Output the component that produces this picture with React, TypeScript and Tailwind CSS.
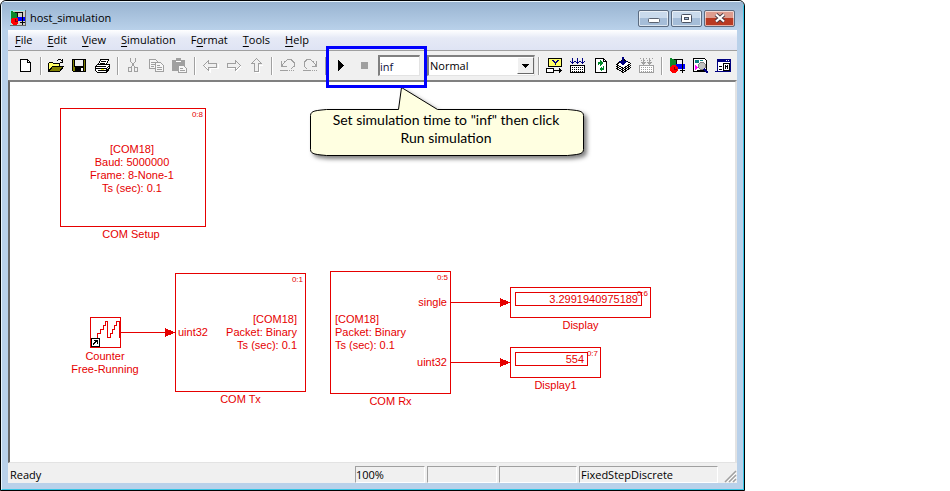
import type { ReactNode } from "react";

const menus: [string, string, string][] = [
  ["", "F", "ile"],
  ["", "E", "dit"],
  ["", "V", "iew"],
  ["", "S", "imulation"],
  ["F", "o", "rmat"],
  ["", "T", "ools"],
  ["", "H", "elp"],
];

function Icon({ children }: { children: ReactNode }) {
  return (
    <svg width="17" height="17" viewBox="0 0 17 17" fill="none" shapeRendering="crispEdges" aria-hidden="true">
      {children}
    </svg>
  );
}

function Tool({ label, children }: { label: string; children: ReactNode }) {
  return (
    <button type="button" aria-label={label} className="flex h-6 w-[23px] shrink-0 items-center justify-center">
      {children}
    </button>
  );
}

function Divider() {
  return (
    <div className="flex h-[18px] w-2 shrink-0 justify-center">
      <div className="w-px bg-[#a0a0a0]" />
      <div className="w-px bg-white" />
    </div>
  );
}

const GREY = "#a0a0a0";

function ModelIcon() {
  return (
    <>
      <path d="M1 1h2v1h2v1h2v7H1z" fill="#0a8a2a" />
      <path d="M7 7h9v5H7z" fill="#0000ff" />
      <path d="M5 2.500h8.500v12M7.500 3v4M11 13.500h5M13.500 11v5" stroke="#000" />
      <circle cx="5" cy="12" r="4" fill="#ff0000" />
      <path d="M5.500 10v2.500H8" stroke="#800000" />
    </>
  );
}

function DownArrows({ color }: { color: string }) {
  return (
    <path
      d="M3.500 1v6M8.500 1v6M13.500 1v6M2 5.500h3M7 5.500h3M12 5.500h3M1 4.500h1M5 4.500h2M10 4.500h2M15 4.500h1"
      stroke={color}
    />
  );
}

function Keypad({ color }: { color: string }) {
  return (
    <>
      <rect x="1.500" y="8.500" width="14" height="7" stroke={color} fill="#fff" />
      <path d="M3 10.500h12M3 12.500h12M3 14.500h12" stroke={color} strokeDasharray="1 1" />
    </>
  );
}

function Toolbar() {
  return (
    <div className="flex h-[29px] items-center bg-[#f0f0f0] pl-[6px]">
      <Tool label="New">
        <Icon>
          <path d="M3.500 2.500h7l3 3v9h-10z" fill="#fff" stroke="#000" />
          <path d="M10.500 2.500v3h3" stroke="#000" />
        </Icon>
      </Tool>
      <Divider />
      <Tool label="Open">
        <Icon>
          <path d="M.5 14.500v-8l1-1h3l1 1h6v3" fill="#ffff66" stroke="#000" />
          <path d="M.5 14.500l4-5h11l-4 5z" fill="#808000" stroke="#000" />
          <path d="M9 3.500h1M10 2.500h3M13 3.500h1M14.500 2v4M12 5.500h3" stroke="#000" />
        </Icon>
      </Tool>
      <Tool label="Save">
        <Icon>
          <path d="M1.500 2.500h13v12h-12l-1-1z" fill="#808000" stroke="#000" />
          <rect x="4" y="3" width="8" height="6" fill="#f0f0f0" />
          <rect x="4" y="10" width="9" height="5" fill="#000" />
          <rect x="10" y="11" width="2" height="3" fill="#fff" />
          <path d="M3.500 3v6h9V3" stroke="#000" />
        </Icon>
      </Tool>
      <Tool label="Print">
        <Icon>
          <path d="M4.500 7.500l2-5h8l-2 5" fill="#fff" stroke="#000" />
          <path d="M7 4.500h5M6 6.500h5" stroke="#000" />
          <path d="M1.500 9.500l2-2h12v4l-3 4h-9l-2-2z" fill="#fff" stroke="#000" />
          <path d="M2 9.500h10M2 11.500h10.500v4M13 10.500h1M14 9.500h1M13 12.500h1M14 11.500h1M4 13.500h8" stroke="#000" />
          <path d="M7 12h3v1H7z" fill="#ff0" />
        </Icon>
      </Tool>
      <Divider />
      <Tool label="Cut">
        <Icon>
          <path d="M5.500 1v3l4 6M10.500 1v3l-4 6" stroke={GREY} />
          <rect x="3.500" y="10.500" width="3" height="4" stroke={GREY} />
          <rect x="9.500" y="10.500" width="3" height="4" stroke={GREY} />
        </Icon>
      </Tool>
      <Tool label="Copy">
        <Icon>
          <path d="M1.500 2.500h6l2 2v7h-8z" fill="#f7f7f7" stroke={GREY} />
          <path d="M3 5.500h4M3 7.500h4M3 9.500h3" stroke={GREY} />
          <path d="M7.500 5.500h5l3 3v6h-8z" fill="#f7f7f7" stroke={GREY} />
          <path d="M9 8.500h3M9 10.500h5M9 12.500h5" stroke={GREY} />
        </Icon>
      </Tool>
      <Tool label="Paste">
        <Icon>
          <path d="M1 3h4V1h5v2h4v11H1z" fill={GREY} />
          <path d="M5 4.500h5" stroke="#fff" />
          <path d="M7.500 8.500h5l3 3v4h-8z" fill="#f7f7f7" stroke={GREY} />
          <path d="M9 11.500h3M9 13.500h5" stroke={GREY} />
        </Icon>
      </Tool>
      <Divider />
      <Tool label="Back">
        <Icon>
          <path d="M2 9.500h1l5 5v-3h8v-5" stroke="#fff" />
          <path d="M1.500 8.500l5-5v3h8v4h-8v3z" stroke={GREY} />
        </Icon>
      </Tool>
      <Tool label="Forward">
        <Icon>
          <path d="M3 11.500h8v3l5-5" stroke="#fff" />
          <path d="M15.500 8.500l-5-5v3h-8v4h8v3z" stroke={GREY} />
        </Icon>
      </Tool>
      <Tool label="Go up">
        <Icon>
          <path d="M7 15.500h4.500v-7h3" stroke="#fff" />
          <path d="M8.500 1.500l-5 5h3v8h4v-8h3z" stroke={GREY} />
        </Icon>
      </Tool>
      <Divider />
      <Tool label="Undo">
        <Icon>
          <path d="M2.500 4v5h5M3 8.500l3-4 3-2h3l3 3v4l-3 2" stroke={GREY} />
          <path d="M1 13.500h8" stroke={GREY} />
          <path d="M10 13.500h6" stroke={GREY} strokeDasharray="1 1" />
        </Icon>
      </Tool>
      <Tool label="Redo">
        <Icon>
          <path d="M14.500 4v5h-5M14 8.500l-3-4-3-2H5l-3 3v4l3 2" stroke={GREY} />
          <path d="M1 13.500h8" stroke={GREY} />
          <path d="M10 13.500h6" stroke={GREY} strokeDasharray="1 1" />
        </Icon>
      </Tool>
      <Divider />
      <div className="relative flex items-center">
        <Tool label="Run simulation">
          <Icon>
            <path d="M5 3h1v1h1v1h1v1h1v1h1v1h1v1h-1v1H9v1H8v1H7v1H6v1H5z" fill="#000" />
          </Icon>
        </Tool>
        <Tool label="Stop simulation">
          <Icon>
            <rect x="5" y="5" width="7" height="7" fill={GREY} />
          </Icon>
        </Tool>
        <input
          aria-label="Simulation stop time"
          defaultValue="inf"
          className="ml-0.5 h-[21px] w-[42px] border-t-2 border-r border-b border-l-2 border-t-[#808080] border-r-[#e3e3e3] border-b-[#e3e3e3] border-l-[#808080] bg-white text-[11px] leading-4 text-[#101040] outline-none"
        />
        <div className="pointer-events-none absolute -top-2 -left-1 z-10 h-[42px] w-[101px] border-[3px] border-[#0000fe]" />
      </div>
      <div className="relative ml-[7px] h-[21px] w-[108px] shrink-0">
        <select
          aria-label="Simulation mode"
          className="block size-full appearance-none border-t-2 border-r border-b border-l-2 border-t-[#808080] border-r-[#e3e3e3] border-b-[#e3e3e3] border-l-[#808080] bg-white pl-px text-[11px] leading-4 text-black outline-none"
        >
          <option>Normal</option>
        </select>
        <div className="pointer-events-none absolute top-0.5 right-px flex h-[17px] w-[17px] items-center justify-center border border-t-white border-r-[#696969] border-b-[#696969] border-l-white bg-[#f0f0f0]">
          <svg width="7" height="4" viewBox="0 0 7 4" shapeRendering="crispEdges" aria-hidden="true">
            <path d="M0 0h7v1H6v1H5v1H4v1H3V3H2V2H1V1H0z" fill="#000" />
          </svg>
        </div>
      </div>
      <Divider />
      <Tool label="Signal display">
        <Icon>
          <rect x="2.500" y="1.500" width="13" height="8" fill="#ffff66" stroke="#000" />
          <path d="M6 3h2v1h1v1h1V4h1V3h2v1h-1v1h-1v1h-1v2H9V6H8V5H7V4H6z" fill="#000080" />
          <rect x=".5" y="11.500" width="7" height="4" fill="#fff" stroke="#000" />
          <path d="M8 13.500h8M13.500 11v5M14.500 12v3" stroke="#000" />
        </Icon>
      </Tool>
      <Tool label="Incremental build">
        <Icon>
          <DownArrows color="#000080" />
          <Keypad color="#000" />
        </Icon>
      </Tool>
      <Tool label="Refresh model blocks">
        <Icon>
          <path d="M3.500 1.500h8l3 3v11h-11z" fill="#fff" stroke="#000" />
          <path d="M11.500 1.500v3h3" stroke="#000" />
          <path d="M6 8V5h2V3l3 3-3 3V7H7v1zM12 9v4h-2v2l-3-3 3-3v2h1V9z" fill="#008a2a" />
        </Icon>
      </Tool>
      <Tool label="Update diagram">
        <Icon>
          <path d="M1.500 11.500l7 4 7-5-7-4z" fill="#fff" stroke="#000" />
          <path d="M1.500 9.500l7 4 7-5-7-4z" fill="#fff" stroke="#000" />
          <path d="M1.500 7.500l7 4 7-5-7-4z" fill="#fff" stroke="#000" />
          <path d="M7 0h2v4h3v1h-1v1h-1v1H9v1H7V7H6V6H5V5H4V4h3z" fill="#000080" />
        </Icon>
      </Tool>
      <Tool label="Build subsystem">
        <Icon>
          <path d="M2 1.500h13M3 3.500h12" stroke={GREY} strokeDasharray="1 2" />
          <path d="M5.500 2v6M11.500 2v6M3 5.500h5M4 6.500h3M9 5.500h5M10 6.500h3" stroke={GREY} />
          <Keypad color={GREY} />
        </Icon>
      </Tool>
      <Divider />
      <Tool label="Library browser">
        <Icon>
          <ModelIcon />
        </Icon>
      </Tool>
      <Tool label="Model explorer">
        <Icon>
          <path d="M1.500 1.500h11l2 2v11h-13z" fill="#fff" stroke="#000" />
          <path d="M3 3h4v3H3zM8 3h3v1H8z" fill="#108080" />
          <path d="M3 8l3 2-3 3z" fill="#ff00ff" />
          <path d="M5 13h7v1H5z" fill="#000" />
          <circle cx="10" cy="9" r="3.500" fill="#c0c0c0" stroke="#808080" />
          <path d="M12 12l4 4" stroke="#000080" strokeWidth="2" />
        </Icon>
      </Tool>
      <Tool label="Debug">
        <Icon>
          <rect x="2.500" y="2.500" width="13" height="12" fill="#fff" stroke="#000080" />
          <path d="M2 2h14v3H2z" fill="#000080" />
          <path d="M11 3.500h4" stroke="#fff" strokeDasharray="1 1" />
          <path d="M8.500 6v8M14.500 6v8M8 6.500h6M8 13.500h6M10.500 8v4M12.500 8v4M10 9.500h3M4 9.500h3M4 12.500h3" stroke="#000" />
          <path d="M0 14.500h2" stroke="#000080" />
        </Icon>
      </Tool>
    </div>
  );
}

function PriorityTag({ children }: { children: string }) {
  return <span className="absolute top-px right-0.5 text-[8px] leading-[9px]">{children}</span>;
}

function Callout() {
  return (
    <div className="absolute top-[3px] left-[300px] h-[74px] w-[276px]">
      <svg
        width="276"
        height="74"
        viewBox="0 0 276 74"
        className="absolute inset-0 overflow-visible drop-shadow-[3px_3px_2px_rgba(0,0,0,0.5)]"
        aria-hidden="true"
      >
        <path
          d="M16.500 24.500H88.500L91.500 2.500L127.500 24.500H257.500C267 25.500 273.500 25.500 273.500 30.500V64.500C273.500 69.500 267 69.500 257.500 70.500H16.500C7 69.500 .5 69.500 .5 64.500V30.500C.5 25.500 7 25.500 16.500 24.500z"
          fill="#ffffe1"
          stroke="#000"
        />
      </svg>
      <p className="relative pt-[26px] pr-1 text-center font-['Lato','Open_Sans',sans-serif] text-[14px] leading-[18px] text-black">
        Set simulation time to "inf" then click
        <br />
        Run simulation
      </p>
    </div>
  );
}

function Canvas() {
  return (
    <section
      aria-label="Model"
      className="relative min-h-[383px] flex-1 overflow-hidden border-t-2 border-r-2 border-b border-l-2 border-t-[#808080] border-r-[#e3e3e3] border-b-[#e3e3e3] border-l-[#696969] bg-white font-['Liberation_Sans',Arial,sans-serif] text-[11px] leading-[13px] whitespace-nowrap text-[#e60000]"
    >
      <svg className="absolute inset-0 size-full" fill="#e60000" shapeRendering="crispEdges" aria-hidden="true">
        <path d="M111 250h46v1h-46zM441 220h50v1h-50zM441 280h50v1h-50z" />
        <path d="M155 246l10 4.500-10 4.500zM490 216l10 4.500-10 4.500zM490 276l10 4.500-10 4.500z" />
      </svg>

      <div className="absolute top-[26px] left-[50px] w-[146px] text-center">
        <div className="relative flex h-[119px] flex-col justify-center border border-[#e60000] pt-0.5 pr-0.5">
          <PriorityTag>0:8</PriorityTag>
          <div>[COM18]</div>
          <div>Baud: 5000000</div>
          <div>Frame: 8-None-1</div>
          <div>Ts (sec): 0.1</div>
        </div>
        <div className="pt-px pr-1">COM Setup</div>
      </div>

      <div className="absolute top-[235px] left-[45px] flex w-[100px] flex-col items-center text-center">
        <div className="relative size-[31px] border border-[#e60000]">
          <svg width="29" height="29" viewBox="0 0 29 29" fill="none" shapeRendering="crispEdges" aria-hidden="true">
            <path
              d="M3 20.500h3.500v-5h3v-4h3v-4h2v-4h2v16h3v-4h2v-4h2v-4h2v-4h3v16"
              stroke="#e60000"
            />
            <rect x=".5" y="20.500" width="8" height="8" fill="#fff" stroke="#000" />
            <path d="M2 26.500h1M2.500 25v1M3.500 24v2M4.500 23v2M5.500 22v2M6.500 22v4M3 22.500h4M4 23.500h3" stroke="#000" />
          </svg>
        </div>
        <div className="pt-0.5">Counter</div>
        <div>Free-Running</div>
      </div>

      <div className="absolute top-[191px] left-[165px] w-[131px] text-center">
        <div className="relative flex h-[119px] items-center justify-between border border-[#e60000] pr-2 pl-0.5">
          <PriorityTag>0:1</PriorityTag>
          <span>uint32</span>
          <div className="text-right">
            <div>[COM18]</div>
            <div>Packet: Binary</div>
            <div>Ts (sec): 0.1</div>
          </div>
        </div>
        <div className="pt-px">COM Tx</div>
      </div>

      <div className="absolute top-[189px] left-[320px] w-[121px] text-center">
        <div className="relative flex h-[123px] justify-between border border-[#e60000] pr-[3px] pl-1">
          <PriorityTag>0:5</PriorityTag>
          <div className="self-center text-left">
            <div>[COM18]</div>
            <div>Packet: Binary</div>
            <div>Ts (sec): 0.1</div>
          </div>
          <div className="flex flex-col justify-between pt-6 pb-6 text-right">
            <span>single</span>
            <span>uint32</span>
          </div>
        </div>
        <div className="pt-px">COM Rx</div>
      </div>

      <div className="absolute top-[205px] left-[500px] w-[141px] text-center">
        <div className="relative h-[31px] border border-[#e60000] pt-1 pl-1">
          <PriorityTag>0:6</PriorityTag>
          <output className="flex h-[14px] w-[127px] items-center justify-end border border-[#e60000] pr-[3px]">
            3.2991940975189
          </output>
        </div>
        <div className="pt-px">Display</div>
      </div>

      <div className="absolute top-[265px] left-[500px] w-[91px] text-center">
        <div className="relative h-[31px] border border-[#e60000] pt-1 pl-1">
          <PriorityTag>0:7</PriorityTag>
          <output className="flex h-[14px] w-[73px] items-center justify-end border border-[#e60000] pr-[3px]">
            554
          </output>
        </div>
        <div className="pt-px">Display1</div>
      </div>

      <Callout />
    </section>
  );
}

function StatusBar() {
  const cell =
    "h-[17px] shrink-0 border border-t-[#a0a0a0] border-l-[#a0a0a0] border-r-white border-b-white leading-4";
  return (
    <footer className="flex h-5 items-start gap-0.5 bg-[#f0f0f0] pt-[3px] pl-0.5 text-[11px] text-black">
      <div className="flex-1 leading-[17px]">Ready</div>
      <div className={`${cell} w-[70px]`}>100%</div>
      <div className={`${cell} w-[70px]`} />
      <div className={`${cell} w-[78px]`} />
      <div className={`${cell} w-[139px] pl-px`}>FixedStepDiscrete</div>
      <div className="flex h-[17px] w-[17px] items-end justify-end">
        <svg width="13" height="13" viewBox="0 0 13 13" aria-hidden="true">
          <path d="M1 12L12 1M5 12l7-7M9 12l3-3" stroke="#a0a0a0" strokeWidth="1.5" />
          <path d="M3 12l9-9M7 12l5-5M11 12l1-1" stroke="#fff" />
        </svg>
      </div>
    </footer>
  );
}

const frameButton =
  "flex h-[17px] w-[31px] items-center justify-center rounded-[2px] border border-[#5b6b80] shadow-[inset_0_0_0_1px_rgba(255,255,255,0.6)]";

export default function App() {
  return (
    <div className="min-h-screen bg-white pr-[205px] font-['Open_Sans','Noto_Sans',sans-serif]">
      <main className="flex min-h-screen flex-col overflow-hidden rounded-t-[6px] border border-black bg-[#b9d1ea]">
        <div className="flex flex-1 flex-col rounded-t-[5px] border border-t-[#e8f4fc] border-r-[#35c5e5] border-b-[#35c5e5] border-l-[#e8f4fc]">
          <header className="flex h-7 items-center bg-gradient-to-b from-[#99b4d1] to-[#b9d1ea] pt-1 pr-2 pl-2">
            <svg width="16" height="16" viewBox="0 0 17 17" fill="none" shapeRendering="crispEdges" aria-hidden="true">
              <rect width="17" height="17" fill="#d4d0c8" />
              <path d="M.5 17V.5H17" stroke="#7fe5f0" />
              <path d="M0 16.500h16.500V0" stroke="#606060" />
              <ModelIcon />
            </svg>
            <h1 className="flex-1 pl-1 text-[11px] leading-4 text-black">host_simulation</h1>
            <div className="flex gap-0.5">
              <button type="button" aria-label="Minimize" className={`${frameButton} bg-gradient-to-b from-[#c9daec] from-50% to-[#a5bdd8] to-50%`}>
                <svg width="12" height="11" viewBox="0 0 12 11" aria-hidden="true">
                  <rect x=".5" y="5.500" width="11" height="4" rx="1" fill="#fff" stroke="#5a6270" />
                </svg>
              </button>
              <button type="button" aria-label="Maximize" className={`${frameButton} bg-gradient-to-b from-[#c9daec] from-50% to-[#a5bdd8] to-50%`}>
                <svg width="11" height="9" viewBox="0 0 11 9" aria-hidden="true">
                  <rect x=".5" y=".5" width="10" height="8" rx="1" fill="#fff" stroke="#4a5262" />
                  <rect x="3.500" y="3.500" width="4" height="2" fill="#a5bdd8" stroke="#4a5262" />
                </svg>
              </button>
              <button type="button" aria-label="Close" className={`${frameButton} bg-gradient-to-b from-[#dd9c8e] from-50% to-[#b93a22] to-50%`}>
                <svg width="12" height="10" viewBox="0 0 12 10" aria-hidden="true">
                  <path d="M2 1.500l8 7M10 1.500l-8 7" stroke="#4a3a44" strokeWidth="4" />
                  <path d="M2 1.500l8 7M10 1.500l-8 7" stroke="#fff" strokeWidth="2.200" />
                </svg>
              </button>
            </div>
          </header>
          <div className="flex flex-1 flex-col px-[6px] pb-[6px]">
            <nav
              aria-label="Menu bar"
              className="flex h-[21px] items-start gap-[15px] border-b border-[#a0a0a0] bg-gradient-to-b from-white via-[#e6eaf6] via-40% to-[#dfe4f4] pt-0.5 pl-[7px] text-[11px] leading-4 text-black"
            >
              {menus.map(([before, key, after]) => (
                <button type="button" key={before + key + after}>
                  {before}
                  <span className="underline underline-offset-2">{key}</span>
                  {after}
                </button>
              ))}
            </nav>
            <Toolbar />
            <Canvas />
            <StatusBar />
          </div>
        </div>
      </main>
    </div>
  );
}
